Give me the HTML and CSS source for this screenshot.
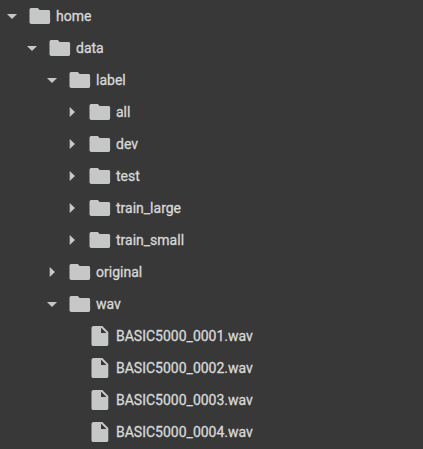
FILE: index.html
```html
<!DOCTYPE html>
<html lang="en">
<head>
<meta charset="utf-8">
<title>Files</title>
<link rel="stylesheet" href="styles.css">
</head>
<body>
<svg class="sprite" aria-hidden="true">
<symbol id="folder" viewBox="0 0 24 24"><path d="M9.700 4H3.500c-1.100 0-2 .7-2 1.700V18.300c0 1 .8 1.700 1.900 1.700h17c1 0 1.700-.7 1.700-1.700V7.700c0-1-.7-1.700-1.700-1.700h-8.700l-2-2z"/></symbol>
<symbol id="file" viewBox="0 0 24 24"><path d="M5.800 2c-1.300 0-2.300.7-2.300 1.800V20.200c0 1.100.9 1.800 2 1.800H18.500c1.100 0 1.800-.7 1.800-1.800V8l-6-6zM13 9V3.500L18.500 9z"/></symbol>
<symbol id="down" viewBox="0 0 24 24"><path d="M7 10l5 5 5-5z"/></symbol>
<symbol id="right" viewBox="0 0 24 24"><path d="M9.700 17l5.300-5-5.300-5v10z"/></symbol>
</svg>
<ul class="tree">
<li><div class="row"><svg class="arrow"><use href="#down"/></svg><svg class="icon"><use href="#folder"/></svg><span>home</span></div>
<ul>
<li><div class="row"><svg class="arrow"><use href="#down"/></svg><svg class="icon"><use href="#folder"/></svg><span>data</span></div>
<ul>
<li><div class="row"><svg class="arrow"><use href="#down"/></svg><svg class="icon"><use href="#folder"/></svg><span>label</span></div>
<ul>
<li><div class="row"><svg class="arrow"><use href="#right"/></svg><svg class="icon"><use href="#folder"/></svg><span>all</span></div></li>
<li><div class="row"><svg class="arrow"><use href="#right"/></svg><svg class="icon"><use href="#folder"/></svg><span>dev</span></div></li>
<li><div class="row"><svg class="arrow"><use href="#right"/></svg><svg class="icon"><use href="#folder"/></svg><span>test</span></div></li>
<li><div class="row"><svg class="arrow"><use href="#right"/></svg><svg class="icon"><use href="#folder"/></svg><span>train_large</span></div></li>
<li><div class="row"><svg class="arrow"><use href="#right"/></svg><svg class="icon"><use href="#folder"/></svg><span>train_small</span></div></li>
</ul></li>
<li><div class="row"><svg class="arrow"><use href="#right"/></svg><svg class="icon"><use href="#folder"/></svg><span>original</span></div></li>
<li><div class="row"><svg class="arrow"><use href="#down"/></svg><svg class="icon"><use href="#folder"/></svg><span>wav</span></div>
<ul>
<li><div class="row file"><svg class="icon"><use href="#file"/></svg><span>BASIC5000_0001.wav</span></div></li>
<li><div class="row file"><svg class="icon"><use href="#file"/></svg><span>BASIC5000_0002.wav</span></div></li>
<li><div class="row file"><svg class="icon"><use href="#file"/></svg><span>BASIC5000_0003.wav</span></div></li>
<li><div class="row file"><svg class="icon"><use href="#file"/></svg><span>BASIC5000_0004.wav</span></div></li>
</ul></li>
</ul></li>
</ul></li>
</ul>
</body>
</html>
```
FILE: styles.css
```css
body {
  margin: 0;
  height: 449px;
  overflow: hidden;
  background: #383838;
  color: #d8d8d8;
  font: 14px/32px Roboto, sans-serif;
  -webkit-text-stroke: 0.3px #d8d8d8;
}
.sprite { display: none; }
ul { list-style: none; margin: 0; padding: 0 0 0 20px; }
.tree { padding: 0; }
.row { display: flex; align-items: center; height: 32px; white-space: nowrap; }
.arrow { width: 24px; height: 24px; margin-right: 4px; fill: #c8c8c8; }
.icon { width: 24px; height: 24px; margin-right: 4px; fill: #c6c8c7; }
.file { padding-left: 28px; }
```
